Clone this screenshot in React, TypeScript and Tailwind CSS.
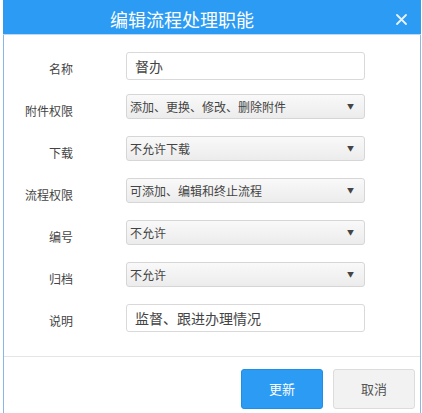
import React from "react";

type Row = { label: string; kind: "input" | "select"; value: string };

const rows: Row[] = [
  { label: "名称", kind: "input", value: "督办" },
  { label: "附件权限", kind: "select", value: "添加、更换、修改、删除附件" },
  { label: "下载", kind: "select", value: "不允许下载" },
  { label: "流程权限", kind: "select", value: "可添加、编辑和终止流程" },
  { label: "编号", kind: "select", value: "不允许" },
  { label: "归档", kind: "select", value: "不允许" },
  { label: "说明", kind: "input", value: "监督、跟进办理情况" },
];

const font = { fontFamily: '"Noto Sans CJK SC", "Noto Sans", sans-serif' };

export default function App() {
  return (
    <div className="h-[413px] w-[422px] overflow-hidden bg-white" style={font}>
      <div className="ml-[3px] w-[418px] border-x border-[#8ab6e6] bg-white">
        {/* header */}
        <div className="-mx-px flex h-[35px] items-center border-b border-[#b9dafa] bg-[#2b9bf4] text-white">
          <div className="flex-1 pl-[107px] pt-[4px] text-[18px] leading-none">编辑流程处理职能</div>
          <svg width="11" height="11" viewBox="0 0 11 11" className="mr-[14px] mt-[4px]">
            <path d="M1 1L10 10M10 1L1 10" stroke="#e6f2fd" strokeWidth="1.8" strokeLinecap="round" />
          </svg>
        </div>

        {/* body */}
        <div className="pt-[15px] pb-[12px]">
          {rows.map((r) => (
            <div key={r.label} className="flex h-[42px]">
              <div className="w-[69px] shrink-0 pt-[12px] text-right text-[12px] leading-[14px] text-[#444]">
                {r.label}
              </div>
              <div className="ml-[53px] pt-[2px]">
                {r.kind === "input" ? (
                  <div className="flex h-[28px] w-[239px] items-center rounded-[3px] border border-[#d9d9d9] bg-white pl-[8px] text-[14px] text-[#444]">
                    {r.value}
                  </div>
                ) : (
                  <div className="flex h-[25px] w-[239px] items-center justify-between rounded-[3px] border border-[#d6d6d6] bg-gradient-to-b from-[#f9f9f9] to-[#ececec] pl-[3px] pr-[10px] text-[12px] text-[#444]">
                    <span>{r.value}</span>
                    <span className="text-[7px] text-[#444]">▼</span>
                  </div>
                )}
              </div>
            </div>
          ))}
        </div>

        {/* footer */}
        <div className="flex justify-end gap-[10px] border-t border-[#e5e5e5] pt-[12px] pr-[5px] pb-[10px]">
          <button className="h-[40px] w-[82px] rounded-[3px] border border-[#1f8ee6] bg-[#2b9bf4] text-[13px] text-white">
            更新
          </button>
          <button className="h-[40px] w-[82px] rounded-[3px] border border-[#dcdcdc] bg-[#f2f2f2] text-[13px] text-[#555]">
            取消
          </button>
        </div>
      </div>
    </div>
  );
}
